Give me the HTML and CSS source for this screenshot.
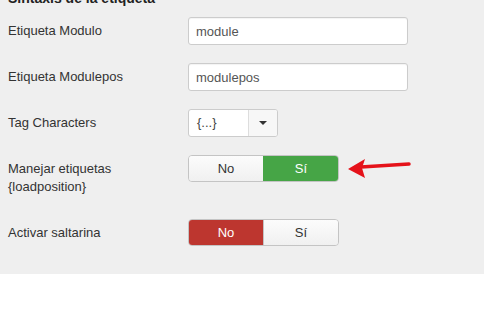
FILE: index.html
```html
<!DOCTYPE html>
<html lang="es">
<head>
  <meta charset="UTF-8" />
  <title>Sintaxis de la etiqueta</title>
  <link rel="stylesheet" href="styles.css">
</head>
<body>

<div class="panel">
  <h3 class="panel-title">Sintaxis de la etiqueta</h3>

  <div class="row">
    <label class="label">Etiqueta Modulo</label>
    <div class="controls"><input class="text" type="text" value="module"></div>
  </div>

  <div class="row">
    <label class="label">Etiqueta Modulepos</label>
    <div class="controls"><input class="text" type="text" value="modulepos"></div>
  </div>

  <div class="row">
    <label class="label">Tag Characters</label>
    <div class="controls">
      <div class="select">
        <span class="select-value">{...}</span>
        <span class="select-btn"><span class="caret"></span></span>
      </div>
    </div>
  </div>

  <div class="row">
    <label class="label">Manejar etiquetas<br>{loadposition}</label>
    <div class="controls">
      <div class="toggle">
        <span class="opt">No</span>
        <span class="opt on-yes">Sí</span>
      </div>
      <svg class="arrow" width="66" height="22" viewBox="0 0 66 22">
        <path d="M62 6 L14 9" stroke="#e5121a" stroke-width="3.5" stroke-linecap="round" fill="none"/>
        <path d="M1 11 L18 1 L15 10 L18 20 Z" fill="#e5121a"/>
      </svg>
    </div>
  </div>

  <div class="row">
    <label class="label">Activar saltarina</label>
    <div class="controls">
      <div class="toggle">
        <span class="opt on-no">No</span>
        <span class="opt">Sí</span>
      </div>
    </div>
  </div>
</div>

</body>
</html>
```

FILE: styles.css
```css
* { margin: 0; padding: 0; box-sizing: border-box; }

body {
  font-family: "Liberation Sans", Arial, sans-serif;
  font-size: 13px;
  line-height: 18px;
  color: #333;
  background: #fff;
}

.panel {
  background: #efefef;
  padding: 0 8px 10px;
  height: 274px;
  overflow: hidden;
}

.panel-title {
  font-size: 14px;
  font-weight: bold;
  line-height: 18px;
  margin-top: -11px;
  margin-bottom: 10px;
  color: #222;
}

.row {
  display: flex;
  align-items: flex-start;
  margin-bottom: 18px;
}

.label {
  width: 180px;
  padding: 5px 0;
  line-height: 18px;
}

.controls {
  display: flex;
  align-items: center;
}

.text {
  width: 220px;
  height: 28px;
  border: 1px solid #ccc;
  border-radius: 3px;
  background: #fff;
  padding: 4px 7px;
  font: inherit;
  color: #555;
  box-shadow: inset 0 1px 1px rgba(0,0,0,0.05);
}

.select {
  display: flex;
  width: 90px;
  height: 28px;
  border: 1px solid #ccc;
  border-radius: 3px;
  background: #fff;
  overflow: hidden;
}

.select-value {
  flex: 1;
  padding: 4px 8px;
  color: #444;
}

.select-btn {
  width: 29px;
  border-left: 1px solid #ddd;
  background: #f7f7f7;
  display: flex;
  align-items: center;
  justify-content: center;
}

.caret {
  width: 0;
  height: 0;
  border-left: 4px solid transparent;
  border-right: 4px solid transparent;
  border-top: 4px solid #333;
}

.toggle {
  display: flex;
  width: 151px;
  height: 27px;
  border: 1px solid #c4c4c4;
  border-radius: 4px;
  overflow: hidden;
}

.opt {
  flex: 1;
  text-align: center;
  line-height: 25px;
  background: linear-gradient(#fcfcfc, #f0f0f0);
  color: #333;
}

.opt + .opt {
  border-left: 1px solid #c4c4c4;
}

.on-yes {
  background: #46a546;
  color: #fff;
  border-left-color: #46a546 !important;
}

.on-no {
  background: #bd362f;
  color: #fff;
}

.arrow {
  margin-left: 8px;
  margin-top: 1px;
}
```
